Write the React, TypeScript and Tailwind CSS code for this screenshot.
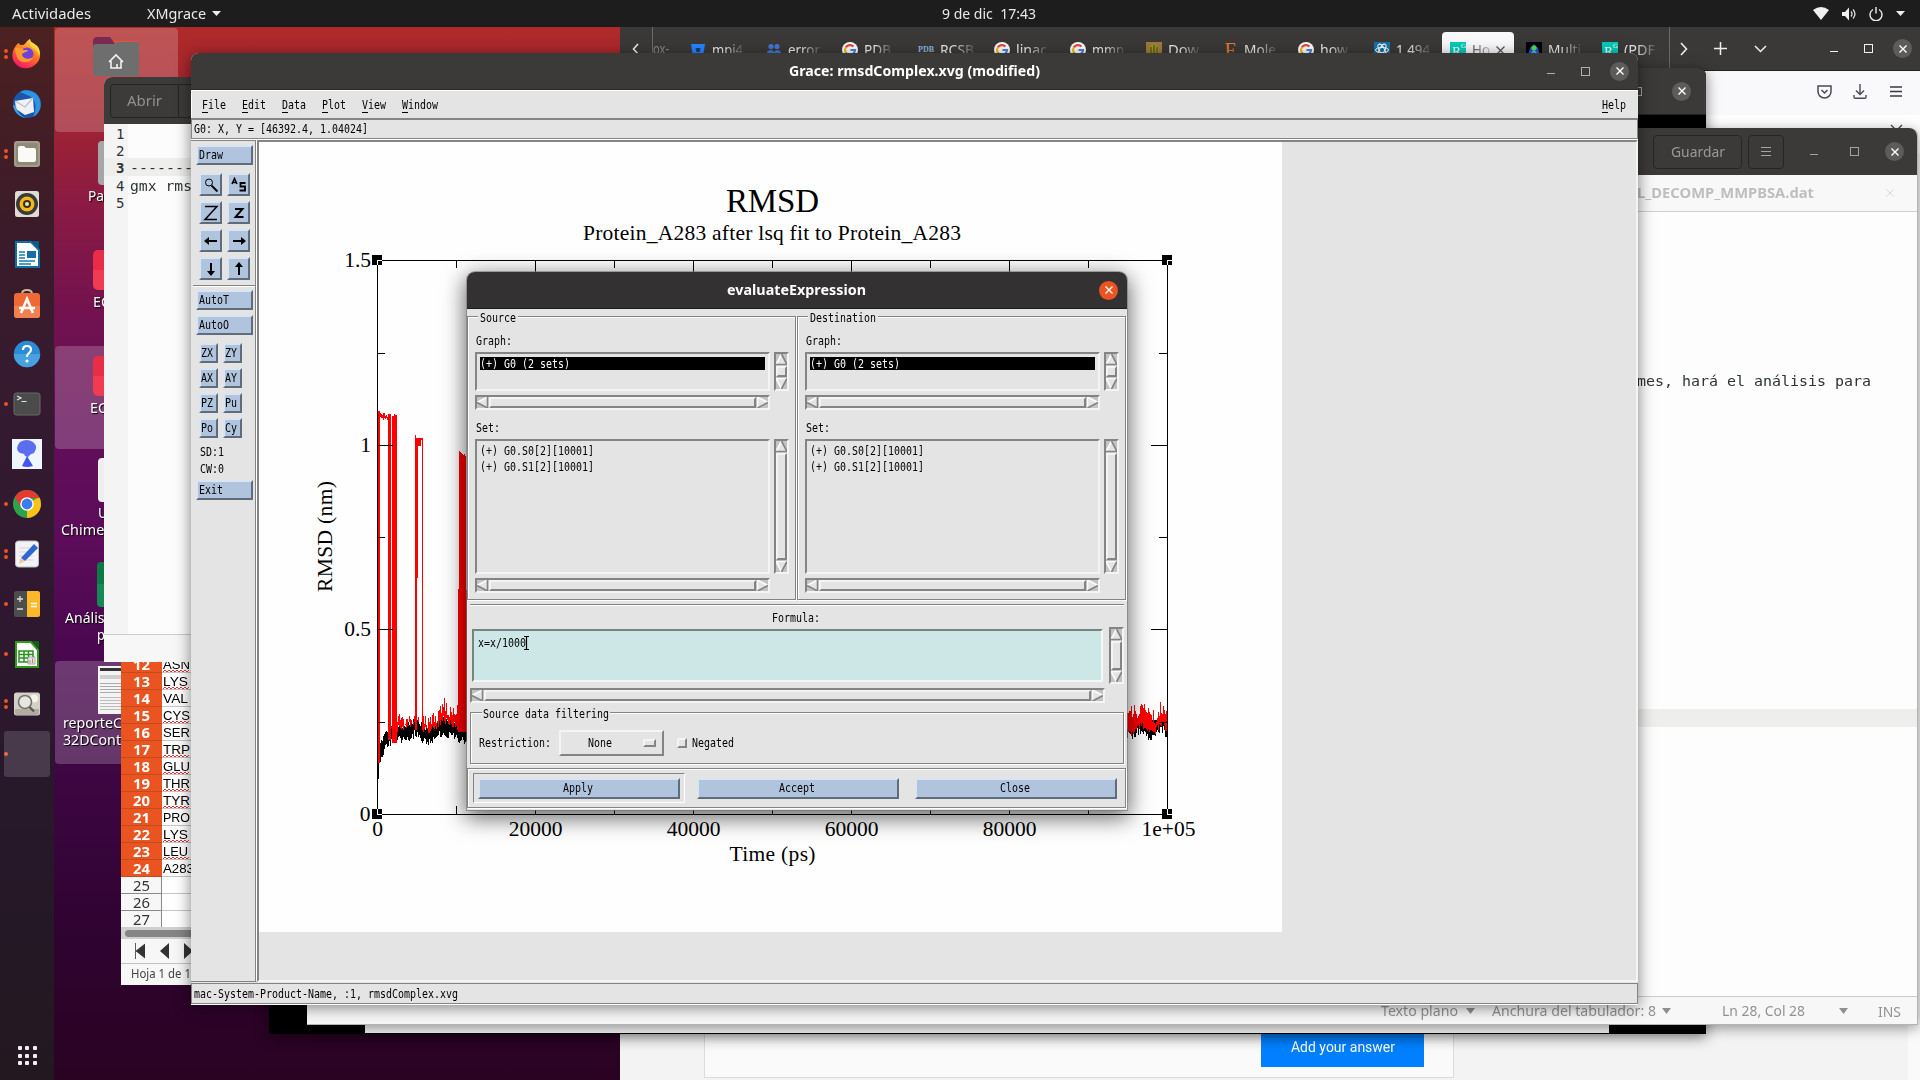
import React, { useLayoutEffect, useRef } from "react";

/* Text set to a known width, condensed or widened horizontally as needed. */
function Fit({ t, w, className = "" }: { t: string; w: number; className?: string }) {
  const ref = useRef<HTMLSpanElement>(null);
  useLayoutEffect(() => {
    const el = ref.current;
    if (!el) return;
    el.style.transform = "none";
    const natural = el.getBoundingClientRect().width;
    if (natural > 0) el.style.transform = `scaleX(${w / natural})`;
  }, [t, w]);
  return (
    <span className="flex shrink-0 items-center text-left leading-none" style={{ width: w }}>
      <span ref={ref} className={`block shrink-0 origin-left whitespace-pre leading-none ${className}`}>{t}</span>
    </span>
  );
}

/* Six pixel wide terminal-like font used by the Motif widgets. */
function M({ t, className = "" }: { t: string; className?: string }) {
  return <Fit t={t} w={t.length * 6} className={`font-['DejaVu_Sans_Mono',monospace] text-[12px] ${className}`} />;
}

const UI = "font-['Noto_Sans',sans-serif]";
const RAISED = "border-2 border-t-[#f4f4f4] border-l-[#f4f4f4] border-b-[#848484] border-r-[#848484]";
const SUNKEN = "border-2 border-t-[#848484] border-l-[#848484] border-b-[#f4f4f4] border-r-[#f4f4f4]";
const BLUE =
  "flex items-center bg-[#b0c4de] border-2 border-t-[#dbe5f1] border-l-[#dbe5f1] border-b-[#5f6c7c] border-r-[#5f6c7c]";

/* ---------- Dock ---------- */

const dockIcons: { dots: number; icon: React.ReactNode }[] = [
  {
    dots: 2,
    icon: (
      <>
        <defs>
          <linearGradient id="ff" x1="0.8" y1="0" x2="0.3" y2="1">
            <stop offset="0" stopColor="#ffe14a" />
            <stop offset="0.45" stopColor="#ff7b1f" />
            <stop offset="1" stopColor="#f7156c" />
          </linearGradient>
        </defs>
        <path d="M3 8c2-3 3-4 4-4 0 2 2 2 4 2C14 5 14 2 18 0c0 4 5 4 8 8 3 5 3 11-1 16-6 7-17 7-22 0-4-5-3-12 0-16z" fill="url(#ff)" />
        <circle cx="15" cy="15" r="6.5" fill="#7040d8" />
        <path d="M3 9c4-1 7 0 8 2h5c-1 3-6 2-6 5 1 4 7 5 11 2-2 6-11 7-15 2-2-4-3-7-3-11z" fill="#ff9a2e" />
        <path d="M18 0c0 4 5 4 8 8 2 4 2 6 1 9-1-5-4-7-6-8-3-2-4-5-3-9z" fill="#ffd83f" />
      </>
    ),
  },
  {
    dots: 0,
    icon: (
      <>
        <circle cx="15" cy="15" r="14" fill="#1c56a8" />
        <path d="M8 3c6-4 17-1 20 8 2 8-1 14-7 17 3-7 4-14-1-19-3-3-8-4-12-6z" fill="#2f93e0" />
        <path d="M3 12l18-3 1 14-9 3-9-6z" fill="#f1f1f1" />
        <path d="M3 12l10 6 8-9" fill="none" stroke="#b9c4d2" strokeWidth="1.3" />
        <path d="M1 16c1 7 6 12 13 13-5-2-9-6-10-12z" fill="#3da3ea" />
      </>
    ),
  },
  {
    dots: 2,
    icon: (
      <>
        <rect x="2" y="2" width="26" height="26" rx="3" fill="#a39c8b" />
        <rect x="4" y="4" width="22" height="22" rx="2" fill="#8f8979" />
        <path d="M6 9q0-2 2-2h4l2 2h8q2 0 2 2v10q0 2-2 2H8q-2 0-2-2z" fill="#fbfaf7" />
      </>
    ),
  },
  {
    dots: 0,
    icon: (
      <>
        <rect x="3" y="2" width="24" height="26" rx="2.5" fill="#e0dbd3" />
        <circle cx="15" cy="15" r="11" fill="#3a3a3a" />
        <circle cx="15" cy="15" r="7.5" fill="#f6b818" />
        <circle cx="15" cy="15" r="4" fill="#3a3014" />
        <circle cx="15" cy="15" r="2" fill="#e8e2d0" />
      </>
    ),
  },
  {
    dots: 0,
    icon: (
      <>
        <path d="M4 3h15l8 8v17H4z" fill="#fff" stroke="#0d70a8" strokeWidth="2" />
        <path d="M20 2h7v8z" fill="#0b5a8a" />
        <path d="M7 13h6M7 16h6M7 19h6M7 22h16M7 25h12" stroke="#177ab4" strokeWidth="1.4" />
        <rect x="15" y="12" width="9" height="7" fill="#1a6ea8" />
      </>
    ),
  },
  {
    dots: 0,
    icon: (
      <>
        <path d="M10 5q0-4 5-4t5 4" fill="none" stroke="#c9b79c" strokeWidth="2" />
        <rect x="2" y="4" width="26" height="25" rx="3" fill="#ed6a35" />
        <path d="M2 17h26v9q0 3-3 3H5q-3 0-3-3z" fill="#f0804f" />
        <path d="M9 24L15 10l6 14M7 19h16" fill="none" stroke="#fff" strokeWidth="2.6" />
      </>
    ),
  },
  {
    dots: 0,
    icon: (
      <>
        <circle cx="15" cy="15" r="13.2" fill="#2b8bd6" />
        <path d="M1.800 15a13.200 13.200 0 0 0 26.400 0z" fill="#46a0e2" />
        <path d="M11 11q0-4 4-4t4 3.600q0 2.400-2.200 3.600Q15 15.300 15 18" fill="none" stroke="#fff" strokeWidth="2.200" />
        <circle cx="15" cy="22" r="1.600" fill="#fff" />
      </>
    ),
  },
  {
    dots: 1,
    icon: (
      <>
        <rect x="2" y="4" width="26" height="22" rx="2.500" fill="#4a4b4a" stroke="#6a6a6a" />
        <path d="M5 7l4 2-4 2M9.500 12.500h5" fill="none" stroke="#e6e6e6" strokeWidth="1.200" />
      </>
    ),
  },
  {
    dots: 0,
    icon: (
      <>
        <rect x="0" y="0" width="30" height="30" fill="#f0f6fe" />
        <path d="M8 3q7-4 13 0 5 4 2 9-1 3-4 3l-3 3-3-1-1-2-4-1q-6-4 0-11z" fill="#5b6ef0" />
        <path d="M15 17l6 10q-6 2-11 0z" fill="#4656ec" />
      </>
    ),
  },
  {
    dots: 1,
    icon: (
      <>
        <circle cx="15" cy="15" r="14" fill="#2da24c" />
        <path d="M15 15L27.100 8A14 14 0 0 1 15 29z" fill="#fbc116" />
        <path d="M3 8l6 10 6-9h12.500Q23 1 15 1T3 8z" fill="#e33b2e" />
        <circle cx="15" cy="15" r="6.800" fill="#fff" />
        <circle cx="15" cy="15" r="5.400" fill="#3b7ded" />
      </>
    ),
  },
  {
    dots: 2,
    icon: (
      <>
        <rect x="3.500" y="2" width="23" height="26" rx="3" fill="#f3f2f4" stroke="#bdbcc2" />
        <path d="M7 9h14M7 13h14M7 17h14M7 21h14" stroke="#d5d4da" />
        <path d="M9 19L22 5l4 4-13 13z" fill="#3065d4" />
        <path d="M9 19l4 3-6 3z" fill="#f0c39b" />
      </>
    ),
  },
  {
    dots: 1,
    icon: (
      <>
        <rect x="2" y="2" width="26" height="26" rx="2.500" fill="#4d4d4d" />
        <path d="M15 2h10.500Q28 2 28 4.500v21q0 2.500-2.500 2.500H15z" fill="#fbb829" />
        <path d="M8 7v6M5 10h6M5 20h6" stroke="#ddd" strokeWidth="1.300" />
        <path d="M19 14.500h6M19 17.500h6" stroke="#fff" strokeWidth="1.300" />
      </>
    ),
  },
  {
    dots: 1,
    icon: (
      <>
        <path d="M4 3h15l7 8v17H4z" fill="#fff" stroke="#2f9b1c" strokeWidth="2" />
        <path d="M20 2h7v8z" fill="#14601a" />
        <path d="M7 12h14v11H7zM7 15.500h14M7 19h14M12 12v11M16.500 12v11" fill="none" stroke="#27911d" strokeWidth="1.500" />
        <rect x="16" y="18" width="7" height="7" fill="#dfe6ee" stroke="#888" strokeWidth=".7" />
        <path d="M18 24v-3M20.500 24v-4.500" stroke="#e8762d" />
      </>
    ),
  },
  {
    dots: 2,
    icon: (
      <>
        <rect x="2" y="3.500" width="26" height="23" rx="2.500" fill="#d4d0c6" />
        <path d="M3 20h24v4q0 2-2 2H5q-2 0-2-2z" fill="#b2ad9f" />
        <circle cx="22" cy="9.500" r="4" fill="#f4f2ec" />
        <circle cx="13" cy="13" r="6.500" fill="#e6e7e3" stroke="#75756f" strokeWidth="1.600" />
        <path d="M17.500 18l4.500 4.500" stroke="#5b5b55" strokeWidth="2.400" />
      </>
    ),
  },
  { dots: 1, icon: null },
];

function Dock() {
  return (
    <div className="flex w-[54px] flex-col justify-between bg-[linear-gradient(#4c2120_0%,#3c1b29_18%,#341a31_38%,#2f182f_55%,#27182a_75%,#231820_100%)] pt-[2px]">
      <div className="flex flex-col">
        {dockIcons.map((d, i) => (
          <div key={i} className="flex h-[50px] items-center">
            <div className="flex w-3 flex-col items-center gap-[2px]">
              {Array.from({ length: d.dots }, (_, k) => (
                <span key={k} className="size-1 rounded-full bg-[#e95420]" />
              ))}
            </div>
            {d.icon ? (
              <svg className="size-[30px]" viewBox="0 0 30 30">{d.icon}</svg>
            ) : (
              <div className="-ml-2 h-[46px] w-[46px] rounded-[3px] bg-white/15" />
            )}
          </div>
        ))}
      </div>
      <div className="grid grid-cols-3 gap-[3.500px] self-center pb-[15px]">
        {Array.from({ length: 9 }, (_, i) => (
          <span key={i} className="size-1 rounded-[1px] bg-[#f0eef0]" />
        ))}
      </div>
    </div>
  );
}

/* ---------- Desktop ---------- */

function Label({ t, w }: { t: string; w: number }) {
  return <Fit t={t} w={w} className={`${UI} text-[14px] text-white [text-shadow:1px_1px_1px_#000]`} />;
}

function DesktopIcons() {
  return (
    <>
      <div className="absolute left-[55px] top-[28px] h-[104px] w-[123px] rounded bg-white/20 pl-[38px] pt-[8px]">
        <svg width="46" height="42" viewBox="0 0 46 42">
          <path d="M0 5q0-4 4-4h13l4 4h20q5 0 5 4v10H0z" fill="#e5542a" />
          <path d="M0 5q0-4 4-4h13l6 8v8H0z" fill="#7b2a55" />
          <path d="M0 11q0-3 3-3h18l3-2h19q3 0 3 3v27q0 4-4 4H4q-4 0-4-4z" fill="#6f6e6e" />
          <path d="M16 26l7-7 7 7M18 25v7h10v-7M24 32v-4" fill="none" stroke="#f3f3f3" strokeWidth="1.600" />
        </svg>
      </div>
      <div className="absolute left-[88px] top-[141px] flex flex-col">
        <div className="ml-[10px] h-[44px] w-[40px] rounded bg-[#a6a6a6]" />
        <div className="mt-[4px] flex"><Label t="Pa" w={16} /></div>
      </div>
      <div className="absolute left-[93px] top-[250px] flex flex-col">
        <div className="h-[40px] w-[40px] rounded-[5px] bg-[linear-gradient(#e72e46_50%,#f03b50_50%)]" />
        <div className="mt-[5px] flex"><Label t="EC" w={17} /></div>
      </div>
      <div className="absolute left-[55px] top-[346px] h-[103px] w-[123px] rounded bg-white/20 pl-[38px] pt-[10px]">
        <div className="h-[40px] w-[40px] rounded-[5px] bg-[linear-gradient(#e72e46_50%,#f03b50_50%)]" />
        <div className="-ml-[3px] mt-[5px] flex"><Label t="EC" w={17} /></div>
      </div>
      <div className="absolute left-[61px] top-[458px] flex flex-col">
        <div className="ml-[37px] h-[44px] w-[40px] rounded bg-[#eeeeee]" />
        <div className="ml-[37px] mt-[4px] flex"><Label t="U" w={10} /></div>
        <div className="mt-[3px] flex"><Label t="Chimera" w={57} /></div>
      </div>
      <div className="absolute left-[65px] top-[562px] flex flex-col">
        <div className="ml-[32px] h-[45px] w-[40px] rounded bg-[linear-gradient(#0b7a45_50%,#158a55_50%)]" />
        <div className="mt-[4px] flex"><Label t="Análisis" w={50} /></div>
        <div className="ml-[32px] mt-[3px] flex"><Label t="p" w={8} /></div>
      </div>
      <div className="absolute left-[55px] top-[661px] flex h-[103px] w-[123px] flex-col rounded bg-white/20 pl-[8px] pt-[5px]">
        <div className="ml-[35px] h-[48px] w-[40px] bg-[#f4f4f4] px-[2px] pt-[2px]">
          <div className="h-[3px] bg-[#333]" />
          <div className="mt-[4px] h-[4px] bg-[#cfcfcf]" />
          <div className="mt-[4px] h-[10px] bg-[repeating-linear-gradient(#aaa_0_1px,#f4f4f4_1px_3px)]" />
          <div className="mt-[4px] h-[14px] bg-[repeating-linear-gradient(#bbb_0_1px,#f4f4f4_1px_3px)]" />
        </div>
        <div className="mt-[2px] flex"><Label t="reporteC" w={59} /></div>
        <div className="mt-[3px] flex"><Label t="32DCont" w={58} /></div>
      </div>
    </>
  );
}

/* ---------- Window buttons ---------- */

function MinMax({ gap, color }: { gap: string; color: string }) {
  return (
    <div className={`flex items-center ${gap} ${color}`}>
      <span className="mt-[5px] h-px w-2 bg-current" />
      <span className="size-[9px] border border-current" />
    </div>
  );
}

function CloseDot({ className = "bg-[#5d5c5b]" }: { className?: string }) {
  return (
    <span className={`flex size-[19px] items-center justify-center rounded-full ${className}`}>
      <svg width="8" height="8" viewBox="0 0 8 8"><path d="M.5.5l7 7M7.500.5l-7 7" stroke="#fff" strokeWidth="1.400" /></svg>
    </span>
  );
}

/* ---------- Browser ---------- */

function G() {
  return (
    <svg width="16" height="16" viewBox="0 0 16 16">
      <circle cx="8" cy="8" r="8" fill="#fff" />
      <g fill="none" strokeWidth="2.200">
        <path d="M11.500 4.500A5 5 0 0 0 3.700 5.500" stroke="#ea4335" />
        <path d="M3.700 5.500a5 5 0 0 0 0 5" stroke="#fbbc05" />
        <path d="M3.700 10.500a5 5 0 0 0 7.600 1.200" stroke="#34a853" />
        <path d="M11.300 11.700A5 5 0 0 0 13 8H8.500" stroke="#4285f4" />
      </g>
    </svg>
  );
}

function RG() {
  return (
    <span className="flex size-4 items-start bg-[#00ccbb] pl-[2px] font-['Liberation_Serif',serif] text-[13px] leading-[17px] text-white">
      R<span className="text-[7px] leading-[9px]">G</span>
    </span>
  );
}

const tabs: { icon: React.ReactNode; t: string; w: number; active?: boolean }[] = [
  { icon: <svg width="16" height="16"><path d="M1 2h14l-2 13H3z" fill="#2684ff" /><path d="M5.500 6h5l-1 4h-3z" fill="#123a7a" /></svg>, t: "mpi4", w: 31 },
  { icon: <svg width="16" height="16" fill="#3f78d8"><circle cx="5" cy="4.500" r="2.600" /><circle cx="11" cy="4.500" r="2.600" /><path d="M1 15V10q4-4 7 0 3-4 7 0v5z" /></svg>, t: "error", w: 32 },
  { icon: <G />, t: "PDB", w: 27 },
  { icon: <span className="font-['Liberation_Serif',serif] text-[8px] font-bold leading-none text-[#8fb8dd]">PDB</span>, t: "RCSB", w: 34 },
  { icon: <G />, t: "linac", w: 31 },
  { icon: <G />, t: "mmp", w: 32 },
  { icon: <svg width="16" height="16"><rect width="16" height="16" fill="#a5773f" /><ellipse cx="8" cy="9" rx="5" ry="7" fill="#8e9a2b" /><path d="M5 5v10M8 3v12M11 5v10" stroke="#59400f" /></svg>, t: "Dow", w: 31 },
  { icon: <span className="font-['Liberation_Serif',serif] text-[20px] leading-none text-[#e8772e]">F</span>, t: "Mole", w: 32 },
  { icon: <G />, t: "how", w: 28 },
  { icon: <svg width="16" height="16"><rect width="16" height="16" fill="#1573a8" /><g fill="none" stroke="#fff"><ellipse cx="8" cy="8" rx="6.500" ry="2.600" /><ellipse cx="8" cy="8" rx="6.500" ry="2.600" transform="rotate(60 8 8)" /><ellipse cx="8" cy="8" rx="6.500" ry="2.600" transform="rotate(120 8 8)" /></g></svg>, t: "1.494", w: 34 },
  { icon: <RG />, t: "Ho", w: 18, active: true },
  { icon: <svg width="16" height="16"><rect width="16" height="16" fill="#000" /><path d="M8 2l4 4 2 8H2l2-8z" fill="#2454d8" /><circle cx="8" cy="6" r="2.500" fill="#50e050" /><path d="M3 14l5-5 5 5" fill="none" stroke="#50d0e0" strokeWidth="1.500" /></svg>, t: "Multi", w: 33 },
  { icon: <RG />, t: "(PDF", w: 31 },
];

function Browser() {
  return (
    <div className="absolute left-[620px] top-[27px] flex h-[1053px] w-[1300px] flex-col justify-between bg-[#f3f3f3]">
      <div>
        <div className="flex h-[44px] items-center bg-[#3b3938] text-[#e8e8e8]">
          <div className="flex h-full w-[33px] items-center justify-center border-r border-[#6a6968]">
            <svg width="8" height="12" viewBox="0 0 8 12"><path d="M6 1L1.500 6 6 11" fill="none" stroke="#eee" strokeWidth="1.600" /></svg>
          </div>
          <div className="w-[29px] text-[#8a8988]"><Fit t="ox-" w={16} className={`${UI} text-[14px]`} /></div>
          {tabs.map((tab, i) => (
            <div
              key={i}
              className={
                tab.active
                  ? "mr-1 flex h-[39px] w-[72px] items-center gap-[6px] self-end rounded-t bg-[#f9f9fb] pb-[3px] pl-2 text-[#555]"
                  : "flex w-[76px] items-center gap-[6px] pl-2 pt-px"
              }
            >
              <span className="flex w-4 shrink-0 justify-center">{tab.icon}</span>
              <span className={tab.active ? "[mask-image:linear-gradient(90deg,#000,rgba(0,0,0,.3))]" : "[mask-image:linear-gradient(90deg,#000_40%,rgba(0,0,0,.15))]"}>
                <Fit t={tab.t} w={tab.w} className={`${UI} text-[14px]`} />
              </span>
              {tab.active && (
                <svg width="9" height="9" viewBox="0 0 9 9"><path d="M.5.5l8 8M8.500.5l-8 8" stroke="#555" strokeWidth="1.300" /></svg>
              )}
            </div>
          ))}
        </div>
        <div className="h-[44px] bg-[#f9f9fb]" />
      </div>
      <div className="flex justify-between">
        <div className="ml-[84px] flex h-[60px] w-[750px] items-start justify-end border border-t-0 border-[#dcdcdc] bg-[#fafafa] pr-[29px]">
          <div className="flex h-[49px] w-[163px] items-center justify-center bg-[#0080ff] pt-[9px] text-white">
            <Fit t="Add your answer" w={104} className="font-[Roboto,sans-serif] text-[14px]" />
          </div>
        </div>
        <div className="h-[62px] w-3 bg-[#fafafa]" />
      </div>
    </div>
  );
}

function BrowserControls() {
  return (
    <div className="absolute left-[1669px] top-[27px] flex w-[251px] flex-col">
      <div className="flex h-[44px] items-center border-b border-[#222] border-l border-l-[#6a6968] bg-[#3b3938] pl-[10px] pr-[8px]">
        <svg width="8" height="14" viewBox="0 0 8 14"><path d="M1 1l5.500 6L1 13" fill="none" stroke="#eee" strokeWidth="1.600" /></svg>
        <svg className="ml-[26px]" width="13" height="13" viewBox="0 0 13 13"><path d="M6.500 0v13M0 6.500h13" stroke="#eee" strokeWidth="1.500" /></svg>
        <svg className="ml-[27px]" width="13" height="8" viewBox="0 0 13 8"><path d="M1 1l5.500 5.500L12 1" fill="none" stroke="#eee" strokeWidth="1.500" /></svg>
        <div className="ml-auto mr-[20px]"><MinMax gap="gap-[26px]" color="text-[#f4f4f4]" /></div>
        <CloseDot />
      </div>
      <div className="flex h-[44px] items-center justify-end bg-[#f9f9fb] pr-[18px] pb-[3px]">
        <svg width="15" height="14" viewBox="0 0 15 14"><path d="M1 1h13v5.500a6.500 6.500 0 0 1-13 0zM4.500 5l3 3 3-3" fill="none" stroke="#4a4a55" strokeWidth="1.500" /></svg>
        <svg className="ml-[21px]" width="14" height="15" viewBox="0 0 14 15"><path d="M7 0v10M3 6.500l4 4 4-4M1 11v2q0 1.200 1.200 1.200h9.600Q13 14.200 13 13v-2" fill="none" stroke="#4a4a55" strokeWidth="1.400" /></svg>
        <svg className="ml-[23px]" width="12" height="11" viewBox="0 0 12 11"><path d="M0 1h12M0 5.500h12M0 10h12" stroke="#3a3a44" strokeWidth="1.300" /></svg>
      </div>
      <div className="flex h-[38px] justify-end bg-white pr-[17px] pt-[9px]">
        <svg width="13" height="13" viewBox="0 0 13 13"><path d="M1 1l11 11M12 1L1 12" stroke="#444" strokeWidth="1.300" /></svg>
      </div>
    </div>
  );
}

/* ---------- Terminal and second editor ---------- */

function Terminal() {
  return (
    <div className="absolute left-[269px] top-[68px] flex h-[966px] w-[1437px] flex-col rounded-t-lg bg-black shadow-[0_3px_14px_rgba(0,0,0,.5)]">
      <div className="flex h-[47px] items-center justify-end gap-[30px] rounded-t-lg border-b border-[#222] bg-[#3b3a39] pr-[15px]">
        <MinMax gap="gap-[26px]" color="text-[#a3a2a0]" />
        <CloseDot />
      </div>
      <div className="mt-auto h-[10px] pl-[96px] pr-[97px]"><div className="h-[9px] bg-[#f3f3f3]" /></div>
    </div>
  );
}

function Tri({ className }: { className: string }) {
  return <svg className={className} width="9" height="6" viewBox="0 0 9 6"><path d="M0 0h9L4.500 6z" fill="#8f8f8f" /></svg>;
}

function EditorBack() {
  return (
    <div className="absolute left-[307px] top-[128px] flex h-[897px] w-[1611px] flex-col rounded-t-lg border-b border-r border-[#b4b4b4] bg-[#fdfdfd] shadow-[0_3px_14px_rgba(0,0,0,.4)]">
      <div className="flex h-[47px] items-center justify-end rounded-t-lg bg-[#3b3a38] pr-[13px]">
        <div className="flex h-[34px] w-[89px] items-center justify-center rounded border border-[#262525] text-[#9a9996]">
          <Fit t="Guardar" w={54} className={`${UI} text-[14px]`} />
        </div>
        <div className="ml-[6px] flex h-[34px] w-[36px] items-center justify-center rounded border border-[#262525]">
          <svg width="10" height="9" viewBox="0 0 10 9"><path d="M0 .5h10M0 4.500h10M0 8.500h10" stroke="#a5a4a2" /></svg>
        </div>
        <div className="ml-[26px] mr-[26px]"><MinMax gap="gap-[32px]" color="text-[#a3a2a0]" /></div>
        <CloseDot />
      </div>
      <div className="flex h-[37px] items-center justify-end border-b border-[#cfcfcf] bg-[#f8f8f8] pr-[23px] text-[#bfbebc]">
        <Fit t="L_DECOMP_MMPBSA.dat" w={177} className={`${UI} text-[14px] font-bold`} />
        <svg className="ml-[72px]" width="8" height="8" viewBox="0 0 8 8"><path d="M.5.5l7 7M7.500.5l-7 7" stroke="#d8d8d8" /></svg>
      </div>
      <div className="mt-[159px] flex h-[20px] items-center justify-end pr-[46px] text-[#2e3436]">
        <Fit t="mes, hará el análisis para" w={234} className="font-['DejaVu_Sans_Mono',monospace] text-[14px]" />
      </div>
      <div className="mt-[318px] h-[18px] bg-[#eeeeec]" />
      <div className="mt-auto flex h-[28px] items-center justify-end border-t border-[#cccccc] bg-[#f7f7f7] pr-[16px] text-[#929292]">
        <Fit t="Texto plano" w={77} className={`${UI} text-[14px]`} />
        <Tri className="ml-[8px]" />
        <span className="ml-[17px] flex"><Fit t="Anchura del tabulador: 8" w={164} className={`${UI} text-[14px]`} /></span>
        <Tri className="ml-[6px]" />
        <span className="ml-[51px] flex"><Fit t="Ln 28, Col 28" w={83} className={`${UI} text-[14px]`} /></span>
        <Tri className="ml-[34px]" />
        <span className="ml-[30px] flex pt-[2px]"><Fit t="INS" w={23} className={`${UI} text-[14px]`} /></span>
      </div>
    </div>
  );
}

/* ---------- Spreadsheet ---------- */

const rows: [number, string, boolean][] = [
  [12, "ASN", true], [13, "LYS", true], [14, "VAL", false], [15, "CYS", true], [16, "SER", false], [17, "TRP", true],
  [18, "GLU", true], [19, "THR", true], [20, "TYR", true], [21, "PRO", false], [22, "LYS", true], [23, "LEU", true],
  [24, "A283", false], [25, "", false], [26, "", false], [27, "", false],
];

function Sheet() {
  return (
    <div className="absolute left-[121px] top-[656px] flex h-[329px] w-[90px] flex-col overflow-hidden bg-[#f7f7f7]">
      <div className="h-[271px] overflow-hidden">
        {rows.map(([n, t, wavy]) => (
          <div key={n} className="flex h-[17px]">
            <div
              className={
                n < 25
                  ? "flex w-[41px] items-center justify-center border-b border-[#c44a20] bg-[#e95420] pt-[2px] font-bold text-white"
                  : "flex w-[41px] items-center justify-center border-b border-r border-[#8a8a8a] bg-[#f7f7f7] pt-[2px] text-[#333]"
              }
            >
              <Fit t={String(n)} w={17} className={`${UI} text-[14px]`} />
            </div>
            <div className="flex flex-1 items-center border-b border-[#c6c6c6] bg-white pl-px pt-[2px] text-black">
              <span className={wavy ? "relative flex" : "flex"}>
                {t && <Fit t={t} w={n === 24 ? 31 : t === "VAL" || t === "LYS" || t === "LEU" ? 25 : 27} className="font-['Liberation_Sans',sans-serif] text-[13.500px]" />}
                {wavy && (
                  <svg className="absolute -bottom-px left-0" width="26" height="4" viewBox="0 0 26 4">
                    <path d="M0 3l2-2 2 2 2-2 2 2 2-2 2 2 2-2 2 2 2-2 2 2 2-2 2 2 2-2" fill="none" stroke="#f03030" />
                  </svg>
                )}
              </span>
            </div>
          </div>
        ))}
      </div>
      <div className="flex h-[12px] shrink-0 items-center bg-[#cfcfcf] pl-1"><div className="h-[7px] flex-1 rounded-l bg-[#858585]" /></div>
      <div className="flex h-[25px] shrink-0 items-center gap-[15px] border-b border-[#c2c2c2] pl-[14px]">
        <svg width="10" height="16" viewBox="0 0 10 16"><path d="M.5 0v16M10 1v14L1 8z" fill="#333" stroke="#333" strokeWidth=".8" /></svg>
        <svg width="9" height="16" viewBox="0 0 9 16"><path d="M9 0v16L0 8z" fill="#333" /></svg>
        <svg width="9" height="16" viewBox="0 0 9 16"><path d="M0 0v16l9-8z" fill="#333" /></svg>
      </div>
      <div className="flex flex-1 items-center pl-[10px] text-[#444]"><Fit t="Hoja 1 de 1" w={60} className={`${UI} text-[12.500px]`} /></div>
    </div>
  );
}

/* ---------- Front editor ---------- */

function EditorFront() {
  const line = "flex items-center pl-[12px]";
  return (
    <div className="absolute left-[104px] top-[77px] flex h-[585px] w-[110px] flex-col overflow-hidden rounded-tl-lg bg-[#fcfcfc]">
      <div className="flex h-[47px] items-center bg-[#3d3b3a] pl-[6px]">
        <div className="flex h-[34px] w-[69px] items-center justify-center rounded-l border border-[#242323] text-[#92908d]">
          <Fit t="Abrir" w={35} className={`${UI} text-[14.500px]`} />
        </div>
        <div className="h-[34px] flex-1 border-y border-[#242323]" />
      </div>
      <div className="flex flex-1 flex-col bg-[linear-gradient(90deg,#f4f4f4_24px,#fcfcfc_24px)] font-['DejaVu_Sans_Mono',monospace] text-[14px] text-[#2e3436]">
        <div className={`${line} h-[19px] pt-px`}>1</div>
        <div className={`${line} h-[15px] pt-px`}>2</div>
        <div className={`${line} h-[18px] bg-[#eeeeec] pt-[2px]`}>
          <b>3</b><span className="ml-[6px]"><Fit t="--------" w={72} /></span>
        </div>
        <div className={`${line} h-[18px] pt-[2px]`}>
          4<span className="ml-[6px]"><Fit t="gmx rms" w={62} /></span>
        </div>
        <div className={`${line} h-[17px] pt-[2px]`}>5</div>
      </div>
      <div className="h-[28px] border-t border-[#cccccc] bg-[#f7f7f7]" />
    </div>
  );
}

/* ---------- Grace plot ---------- */

function makeNoise() {
  let s = 12345;
  const rnd = () => {
    s = (s * 1103515245 + 12345) % 2147483648;
    return s / 2147483648;
  };
  const interp = (pts: number[][], x: number) => {
    for (let i = 1; i < pts.length; i++) {
      if (x <= pts[i][0]) {
        const [x0, y0] = pts[i - 1];
        const [x1, y1] = pts[i];
        return y0 + ((y1 - y0) * (x - x0)) / (x1 - x0);
      }
    }
    return pts[pts.length - 1][1];
  };
  const mid = [[378, 756], [381, 749], [388, 736], [400, 734], [416, 727], [424, 736], [434, 734], [442, 725], [450, 729], [458, 733], [467, 733]];
  let black = "M378.500 735V779";
  let red = "";
  for (let x = 379; x < 467; x++) {
    const m = interp(mid, x);
    black += `M${x + 0.5} ${(m - 5 - rnd() * 6).toFixed(1)}V${(m + 2 + rnd() * 9).toFixed(1)}`;
    if (x >= 388 && !(x >= 419 && x <= 421)) {
      const top = interp([[388, 725], [394, 724], [400, 706], [407, 716], [416, 710], [424, 714], [434, 710], [443, 697], [450, 704], [467, 704]], x);
      red += `M${x + 0.5} ${(top + rnd() * 17).toFixed(1)}V${(m - 10 + rnd() * 8).toFixed(1)}`;
    }
  }
  for (let x = 380; x < 391; x++) red += `M${x + 0.5} ${411 + (x - 380) * 0.5 + rnd() * 3}V${416 + (x - 380) * 0.3 + rnd() * 4}`;
  const rightTop = [[1126, 709], [1133, 714], [1138, 712], [1141, 702], [1146, 706], [1151, 716], [1155, 720], [1160, 712], [1164, 711], [1167, 713]];
  for (let x = 1126; x < 1167; x++) {
    const wave = Math.sin((x - 1126) / 3.2) * 5;
    const spike = rnd() > 0.82 ? 8 : 0;
    black += `M${x + 0.5} 720V${(729 + wave * 0.7 + rnd() * 9).toFixed(1)}`;
    red += `M${x + 0.5} ${(interp(rightTop, x) - spike + rnd() * 8 - 2).toFixed(1)}V${(726 + wave * 0.7 + rnd() * 7).toFixed(1)}`;
  }
  return { black, red };
}
const noise = makeNoise();

function Plot() {
  let ticks = "";
  for (let i = 1; i < 10; i++) {
    const x = 377.5 + i * 79;
    const l = i % 2 ? 8 : 16;
    ticks += `M${x} 260V${260 + l}M${x} 814V${814 - l}`;
  }
  [353, 445.5, 537.5, 629.5, 722].forEach((y, i) => {
    const l = i % 2 ? 16 : 8;
    ticks += `M377 ${y}h${l}M1167 ${y}h-${l}`;
  });
  return (
    <svg className="block" width="1023" height="790" viewBox="259 142 1023 790" fontFamily="Liberation Serif, serif" fontSize="21.500">
      <rect x="259" y="142" width="1023" height="790" fill="#fefefe" />
      <g shapeRendering="crispEdges" fill="none" stroke="#000">
        <path d={noise.black} />
        <path d={noise.red} stroke="#f00" />
        <g fill="#f00" stroke="none">
          <path d="M378 411h2v352h-2zM388 414h3v326h-3zM392 416h2l1-3 1 4 1-4v330h-5zM415 435h1v3h7v292h-1V440h-1v6h-3v132h-1v152h-2zM459 451h1l1 2 2 2h1l1-2v3h1v134h1v142h-9V589h1z" />
        </g>
        <rect x="377.500" y="260.500" width="790" height="553.500" />
        <path d={ticks} />
      </g>
      {[[377, 260], [1167, 260], [377, 814], [1167, 814]].map(([x, y]) => (
        <g key={`${x}-${y}`} shapeRendering="crispEdges">
          <rect x={x - 5} y={y - 5} width="10" height="10" />
          <path d={y < 500 ? `M${x + 0.5} ${y}v5M${x} ${y + 0.5}h5` : `M${x + 0.5} ${y - 5}v5M${x} ${y + 0.5}h5`} stroke="#fff" fill="none" />
        </g>
      ))}
      <text x="772.500" y="212" fontSize="33" textAnchor="middle" textLength="93">RMSD</text>
      <text x="583" y="239.500" fontSize="21.500" textLength="378">Protein_A283 after lsq fit to Protein_A283</text>
      <text x="729.500" y="861" textLength="86">Time (ps)</text>
      <text transform="translate(332 592) rotate(-90)" textLength="111">RMSD (nm)</text>
      <g textAnchor="end">
        <text x="371" y="266.500">1.5</text>
        <text x="371" y="451.500">1</text>
        <text x="371" y="635.500">0.5</text>
        <text x="370.500" y="821">0</text>
      </g>
      <g textAnchor="middle">
        <text x="377.500" y="836">0</text>
        <text x="535.500" y="836">20000</text>
        <text x="693.500" y="836">40000</text>
        <text x="851.500" y="836">60000</text>
        <text x="1009.500" y="836">80000</text>
        <text x="1168.500" y="836">1e+05</text>
      </g>
    </svg>
  );
}

const toolIcons = [
  <><circle cx="6" cy="5.500" r="3.500" fill="none" /><path d="M8.500 8.500l6 6" strokeWidth="2" /></>,
  <><path d="M1 7l2.500-5.500L6 7M2 5.500h3" fill="none" strokeWidth="1.500" /><path d="M14.500 6H9.500v3.500h4.500v4H8.500" fill="none" strokeWidth="1.800" /></>,
  <path d="M2 1.500h12L2 14.500h12" fill="none" strokeWidth="1.500" />,
  <path d="M4 4h7.500L4.500 12H12.500" fill="none" strokeWidth="1.900" />,
  <path d="M1 8l5-4v3h8v2H6v3z" stroke="none" />,
  <path d="M15 8l-5-4v3H2v2h8v3z" stroke="none" />,
  <path d="M8 15l-4-5h3V2h2v8h3z" stroke="none" />,
  <path d="M8 1L4 6h3v8h2V6h3z" stroke="none" />,
];

function WideButton({ t, className = "" }: { t: string; className?: string }) {
  return <div className={`${BLUE} h-5 w-[57px] pl-px ${className}`}><M t={t} /></div>;
}

function MenuItem({ t }: { t: string }) {
  return (
    <span className="relative flex">
      <M t={t} />
      <i className="absolute -bottom-[2px] left-0 h-px w-[6px] bg-black" />
    </span>
  );
}

function Grace() {
  return (
    <div className="absolute left-[191px] top-[53px] flex h-[951px] w-[1447px] flex-col rounded-t-lg bg-[#e4e4e4] shadow-[0_3px_16px_rgba(0,0,0,.5)]">
      <div className="grid h-[37px] grid-cols-[1fr_251px_1fr] items-center rounded-t-lg border-b border-[#2b2a29] bg-[#3c3a39] pl-[8px] pr-[9px]">
        <span />
        <Fit t="Grace: rmsdComplex.xvg (modified)" w={251} className={`${UI} text-[14px] font-bold text-white`} />
        <div className="flex items-center justify-end gap-[20px]">
          <MinMax gap="gap-[26px]" color="text-[#b0afad]" />
          <CloseDot />
        </div>
      </div>
      <div className="flex h-[28px] items-center border-l border-t border-white pl-[10px] pr-[12px]">
        <div className="flex gap-4">
          {["File", "Edit", "Data", "Plot", "View", "Window"].map((m) => <MenuItem key={m} t={m} />)}
        </div>
        <div className="ml-auto"><MenuItem t="Help" /></div>
      </div>
      <div className="flex h-[21px] items-center border border-t-2 border-[#848484] pl-[2px]"><M t="G0: X, Y = [46392.4, 1.04024]" /></div>
      <div className="h-px bg-white" />
      <div className="flex h-[842px]">
        <div className="w-[66px] border-b border-r border-b-[#848484] border-r-white">
          <div className="flex h-[841px] flex-col border-r border-t border-[#848484] pl-[5px] pt-[4px]">
            <WideButton t="Draw" />
            <div className="ml-[3px] mt-2 grid grid-cols-[23px_23px] gap-[5px]">
              {toolIcons.map((p, i) => (
                <div key={i} className={`${BLUE} h-[23px] justify-center`}>
                  <svg width="16" height="16" viewBox="0 0 16 16" stroke="#000" fill="#000">{p}</svg>
                </div>
              ))}
            </div>
            <div className="-ml-[3px] mt-[5px] h-[2px] border-b border-t border-b-white border-t-[#848484]" />
            <WideButton t="AutoT" className="mt-[3px]" />
            <WideButton t="AutoO" className="mt-[5px]" />
            <div className="ml-[3px] mt-2 grid grid-cols-[19px_19px] gap-[5px]">
              {["ZX", "ZY", "AX", "AY", "PZ", "Pu", "Po", "Cy"].map((t) => (
                <div key={t} className={`${BLUE} h-5`}><M t={t} /></div>
              ))}
            </div>
            <div className="ml-1 mt-[5px] flex h-[17px] items-center"><M t="SD:1" /></div>
            <div className="ml-1 flex h-[17px] items-center"><M t="CW:0" /></div>
            <WideButton t="Exit" className="mt-[3px]" />
          </div>
        </div>
        <div className="flex-1 border-2 border-b-[#f4f4f4] border-l-[#848484] border-r-[#f4f4f4] border-t-[#848484]"><Plot /></div>
      </div>
      <div className="mt-px flex h-[21px] items-center border border-[#848484] pl-[2px] shadow-[0_1px_0_#fff]"><M t="mac-System-Product-Name, :1, rmsdComplex.xvg" /></div>
    </div>
  );
}

/* ---------- evaluateExpression dialog ---------- */

function Arrow({ d }: { d: "up" | "down" | "left" | "right" }) {
  const paths = {
    up: ["M6 0L0 11.500h12z", "M6 0L0 11.500", "M0 11.500h12L6 0"],
    down: ["M0 .5h12L6 12z", "M6 12L0 .5h12", "M12 .5L6 12"],
    left: ["M0 6L11.500 0v12z", "M0 6L11.500 0", "M11.500 0v12L0 6"],
    right: ["M.5 0v12L12 6z", "M.5 12V0L12 6", "M12 6L.5 12"],
  }[d];
  return (
    <svg className="size-[11px] shrink-0" viewBox="0 0 12 12">
      <path d={paths[0]} fill="#e4e4e4" />
      <path d={paths[1]} fill="none" stroke="#fbfbfb" strokeWidth="1.800" />
      <path d={paths[2]} fill="none" stroke="#848484" strokeWidth="1.800" />
    </svg>
  );
}

function VScroll({ className = "" }: { className?: string }) {
  return (
    <div className={`flex w-[15px] flex-col items-center gap-px bg-[#c3c3c3] ${SUNKEN} ${className}`}>
      <Arrow d="up" />
      <div className={`w-full flex-1 bg-[#e4e4e4] ${RAISED}`} />
      <Arrow d="down" />
    </div>
  );
}

function HScroll({ className = "" }: { className?: string }) {
  return (
    <div className={`flex h-[15px] items-center gap-px bg-[#c3c3c3] ${SUNKEN} ${className}`}>
      <Arrow d="left" />
      <div className={`h-full flex-1 bg-[#e4e4e4] ${RAISED}`} />
      <Arrow d="right" />
    </div>
  );
}

const FRAME = "relative border border-[#848484] shadow-[inset_1px_1px_0_#fff,1px_1px_0_#fff]";

function SetPanel({ title }: { title: string }) {
  return (
    <div className={`${FRAME} flex h-[284px] w-[329px] flex-col pl-[7px]`}>
      <span className="absolute left-[10px] top-[-5px] flex bg-[#e4e4e4] px-[2px]"><M t={title} /></span>
      <div className="ml-px mt-[17px] flex h-[14px] items-center"><M t="Graph:" /></div>
      <div className="mt-1 flex h-[39px] gap-1">
        <div className={`w-[295px] px-[3px] pt-[3px] ${SUNKEN}`}>
          <div className="flex h-[13px] items-center bg-black"><M t="(+) G0 (2 sets)" className="text-white" /></div>
        </div>
        <VScroll />
      </div>
      <HScroll className="mt-1 w-[295px]" />
      <div className="ml-px mt-[11px] flex h-[14px] items-center"><M t="Set:" /></div>
      <div className="mt-1 flex h-[135px] gap-1">
        <div className={`w-[295px] pl-[3px] pt-[2px] ${SUNKEN}`}>
          <div className="flex h-4 items-center"><M t="(+) G0.S0[2][10001]" /></div>
          <div className="flex h-4 items-center"><M t="(+) G0.S1[2][10001]" /></div>
        </div>
        <VScroll />
      </div>
      <HScroll className="mt-1 w-[295px]" />
    </div>
  );
}

function Dialog() {
  return (
    <div className="absolute left-[467px] top-[272px] flex h-[538px] w-[660px] flex-col rounded-t-lg bg-[#e4e4e4] shadow-[0_0_0_1px_rgba(120,120,120,.6),0_6px_22px_2px_rgba(0,0,0,.6)]">
      <div className="grid h-[37px] grid-cols-[1fr_139px_1fr] items-center rounded-t-lg border-b border-[#1e1d1d] bg-[#333132] pl-[7px] pr-[9px]">
        <span />
        <Fit t="evaluateExpression" w={139} className={`${UI} text-[14px] font-bold text-white`} />
        <div className="flex justify-end"><CloseDot className="bg-[#e95420]" /></div>
      </div>
      <div className="mt-[7px] flex gap-px">
        <SetPanel title="Source" />
        <SetPanel title="Destination" />
      </div>
      <div className="mx-[3px] mt-[4px] h-[2px] border-b border-t border-b-white border-t-[#848484]" />
      <div className="mt-[5px] flex h-[14px] items-center justify-center pr-[2px]"><M t="Formula:" /></div>
      <div className="ml-[3px] mt-[2px] flex w-[654px] justify-between">
        <div className="ml-[2px] mt-[2px] h-[53px] w-[631px] border-2 border-b-[#f0f8f8] border-l-[#768484] border-r-[#f0f8f8] border-t-[#768484] bg-[#cde6e6] pl-[4px] pt-[5px]">
          <div className="flex items-center">
            <M t="x=x/1000" />
            <svg className="-ml-[3px]" width="7" height="14" viewBox="0 0 7 14"><path d="M1 .5h2l.5.500.5-.500h2M3.500 1v12M1 13.500h5" fill="none" stroke="#000" strokeWidth="1.200" /></svg>
          </div>
        </div>
        <VScroll className="h-[57px]" />
      </div>
      <HScroll className="ml-[3px] mt-1 w-[635px] shrink-0" />
      <div className={`${FRAME} ml-[3px] mt-[9px] flex h-[52px] w-[654px] items-center pl-[8px] pt-[9px]`}>
        <span className="absolute left-[11px] top-[-5px] flex bg-[#e4e4e4] px-[1px]"><M t="Source data filtering" /></span>
        <M t="Restriction:" />
        <div className={`ml-[8px] flex h-[26px] w-[105px] items-center pl-[27px] ${RAISED}`}>
          <M t="None" />
          <div className={`ml-[31px] h-[8px] w-[13px] ${RAISED}`} />
        </div>
        <div className={`ml-[13px] size-[10px] ${RAISED}`} />
        <span className="ml-[5px] flex"><M t="Negated" /></span>
      </div>
      <div className={`${FRAME} mt-[4px] flex h-[40px] w-[659px] items-center pl-[5px]`}>
        <div className="flex h-[30px] w-[212px] items-center border border-b-white border-l-[#848484] border-r-white border-t-[#848484] pl-1">
          <div className={`${BLUE} h-[21px] w-[202px] justify-center pr-[2px]`}><M t="Apply" /></div>
        </div>
        <div className={`${BLUE} ml-[12px] h-[21px] w-[202px] justify-center pr-[2px]`}><M t="Accept" /></div>
        <div className={`${BLUE} ml-[16px] h-[21px] w-[202px] justify-center pr-[2px]`}><M t="Close" /></div>
      </div>
    </div>
  );
}

/* ---------- Top bar ---------- */

function TopBar() {
  return (
    <div className="grid h-[27px] grid-cols-[942px_1fr_auto] items-center bg-[#1d1d1d] text-[#e9e9e9]">
      <div className="flex items-center pl-3">
        <Fit t="Actividades" w={79} className={`${UI} text-[14px]`} />
        <span className="ml-[56px] flex"><Fit t="XMgrace" w={59} className={`${UI} text-[14px]`} /></span>
        <svg className="ml-[6px]" width="9" height="5" viewBox="0 0 9 5"><path d="M0 0h9L4.500 5z" fill="#eee" /></svg>
      </div>
      <span className="flex"><Fit t="9 de dic  17:43" w={94} className={`${UI} text-[14px]`} /></span>
      <div className="flex items-center pr-[15px]">
        <svg width="16" height="13" viewBox="0 0 16 13"><path d="M0 3Q8-3 16 3L8 13z" fill="#f0f0f0" /></svg>
        <svg className="ml-[13px]" width="15" height="14" viewBox="0 0 15 14"><path d="M0 5h3l4-4.500v13L3 9H0z" fill="#f0f0f0" /><path d="M9 4.500q2 2.500 0 5M11 2.500q4 4.500 0 9" fill="none" stroke="#ddd" strokeWidth="1.300" /></svg>
        <svg className="ml-[12px]" width="14" height="14" viewBox="0 0 14 14"><path d="M4 2.500a6 6 0 1 0 6 0M7 0v6.500" fill="none" stroke="#eee" strokeWidth="1.400" /></svg>
        <svg className="ml-[13px]" width="9" height="5" viewBox="0 0 9 5"><path d="M0 0h9L4.500 5z" fill="#eee" /></svg>
      </div>
    </div>
  );
}

export default function App() {
  return (
    <div className="relative flex h-[1080px] w-[1920px] flex-col overflow-hidden bg-[linear-gradient(#b02a2a_27px,#a2242f_110px,#8c1b43_200px,#73124f_310px,#620e59_430px,#5c0c5a_540px,#4a0850_650px,#3d0642_780px,#300332_920px,#2a0322_1080px)]">
      <TopBar />
      <div className="flex flex-1"><Dock /></div>
      <DesktopIcons />
      <Browser />
      <BrowserControls />
      <Terminal />
      <EditorBack />
      <Sheet />
      <EditorFront />
      <Grace />
      <Dialog />
    </div>
  );
}
